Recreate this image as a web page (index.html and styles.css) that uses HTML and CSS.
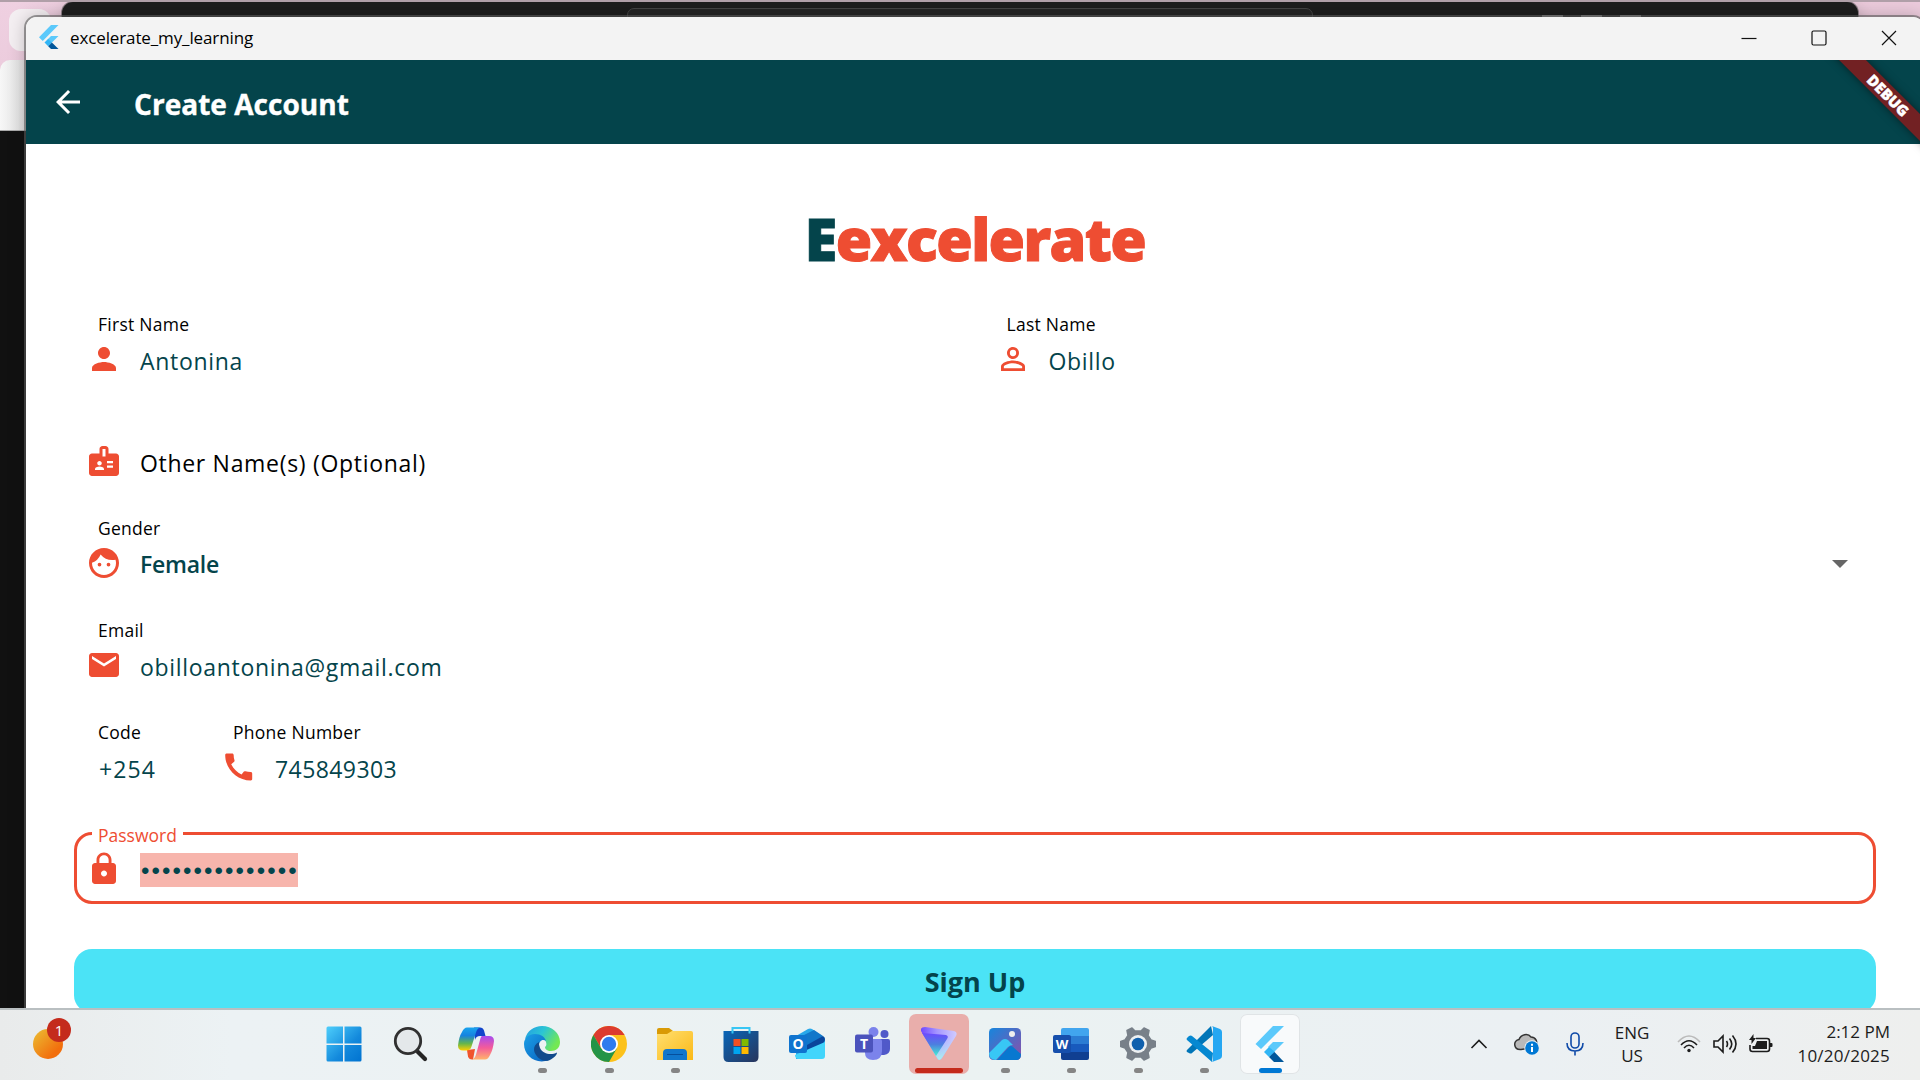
FILE: index.html
```html
<!DOCTYPE html>
<html lang="en">
<head>
<meta charset="utf-8">
<title>excelerate_my_learning</title>
<link rel="stylesheet" href="styles.css">
</head>
<body>
<div class="desktop">
  <div class="back-browser"><div class="back-tab"></div><div class="back-toolbar"></div></div>
  <div class="back-editor"><div class="editor-search"></div><div class="editor-controls"><i></i><i></i><i></i></div></div>

  <main class="window">
    <header class="titlebar">
      <svg class="app-icon" viewBox="0 0 20 24"><path fill="#5bc9fb" d="M12 0h7.500L3.750 16 0 12.200zM12 11h7.500l-6.800 6.700-3.700-3.700z"/><path fill="#31b5f5" d="M5.500 17.500 9.200 13.800l3.700 3.700-3.700 3.700z"/><path fill="#01579b" d="m9.200 21.200 3.700-3.700L19.500 24H12z"/></svg>
      <span class="window-title">excelerate_my_learning</span>
      <div class="controls">
        <svg viewBox="0 0 16 16"><path d="M.5 8.500h15"/></svg>
        <svg viewBox="0 0 16 16"><rect x="1" y="1" width="14" height="14" rx="1.500"/></svg>
        <svg viewBox="0 0 16 16"><path d="m1 1 14 14M15 1 1 15"/></svg>
      </div>
    </header>
    <section class="app">
      <div class="appbar">
        <svg class="back" viewBox="0 0 24 24"><path fill="#fff" d="M20 11H7.830l5.590-5.590L12 4l-8 8 8 8 1.410-1.410L7.830 13H20z"/></svg>
        <h1>Create Account</h1>
      </div>
      <div class="debug"><span>DEBUG</span></div>
      <form class="form">
        <div class="brand"><span>E</span>excelerate</div>
        <div class="row halves">
          <div class="field"><span class="label">First Name</span>
            <svg class="icon" viewBox="0 0 24 24"><path d="M12 12c2.210 0 4-1.790 4-4s-1.790-4-4-4-4 1.790-4 4 1.790 4 4 4zm0 2c-2.670 0-8 1.340-8 4v2h16v-2c0-2.660-5.330-4-8-4z"/></svg>
            <span class="value">Antonina</span></div>
          <div class="field"><span class="label">Last Name</span>
            <svg class="icon" viewBox="0 0 24 24"><path d="M12 5.900a2.100 2.100 0 1 1 0 4.200 2.100 2.100 0 0 1 0-4.200m0 9c2.970 0 6.100 1.460 6.100 2.100v1.100H5.900V17c0-.64 3.130-2.100 6.100-2.100M12 4C9.790 4 8 5.790 8 8s1.790 4 4 4 4-1.790 4-4-1.790-4-4-4zm0 9c-2.670 0-8 1.340-8 4v3h16v-3c0-2.660-5.330-4-8-4z"/></svg>
            <span class="value">Obillo</span></div>
        </div>
        <div class="row"><div class="field">
            <svg class="icon" viewBox="0 0 24 24"><path fill-rule="evenodd" d="M20 7h-5V4c0-1.100-.9-2-2-2h-2c-1.100 0-2 .9-2 2v3H4c-1.100 0-2 .9-2 2v11c0 1.100.9 2 2 2h16c1.100 0 2-.9 2-2V9c0-1.100-.9-2-2-2zM9 12c.83 0 1.500.67 1.500 1.500S9.830 15 9 15s-1.500-.67-1.500-1.500S8.170 12 9 12zm3 6H6v-.43c0-.6.36-1.150.92-1.390a5.200 5.200 0 0 1 4.160 0c.55.24.92.780.92 1.390zM11 4h2v5h-2zm7 12.500h-4V15h4zm0-3h-4V12h4z"/></svg>
            <span class="value plain">Other Name(s) (Optional)</span></div></div>
        <div class="row"><div class="field"><span class="label">Gender</span>
            <svg class="icon" viewBox="0 0 24 24"><path fill-rule="evenodd" d="M10.250 13a1.250 1.250 0 1 1-2.500 0 1.250 1.250 0 0 1 2.500 0zM15 11.750a1.250 1.250 0 1 0 0 2.500 1.250 1.250 0 0 0 0-2.500zM22 12c0 5.520-4.480 10-10 10S2 17.520 2 12 6.480 2 12 2s10 4.480 10 10zm-2 0c0-.78-.12-1.530-.33-2.240-.7.150-1.420.240-2.170.240a10 10 0 0 1-7.760-3.690A10.020 10.020 0 0 1 4 11.860V12c0 4.410 3.590 8 8 8s8-3.590 8-8z"/></svg>
            <span class="value strong">Female</span><span class="caret"></span></div></div>
        <div class="row"><div class="field"><span class="label">Email</span>
            <svg class="icon" viewBox="0 0 24 24"><path d="M20 4H4c-1.100 0-1.990.9-1.990 2L2 18c0 1.100.9 2 2 2h16c1.100 0 2-.9 2-2V6c0-1.100-.9-2-2-2zm0 4-8 5-8-5V6l8 5 8-5z"/></svg>
            <span class="value">obilloantonina@gmail.com</span></div></div>
        <div class="row">
          <div class="field code"><span class="label">Code</span><span class="value">+254</span></div>
          <div class="field"><span class="label">Phone Number</span>
            <svg class="icon" viewBox="0 0 24 24"><path transform="translate(-.2 0)" d="M20.010 15.380c-1.230 0-2.420-.2-3.530-.56a.98.980 0 0 0-1.010.240l-1.570 1.970c-2.830-1.350-5.480-3.900-6.890-6.830l1.950-1.660c.27-.28.35-.67.240-1.020-.37-1.110-.56-2.300-.56-3.530 0-.54-.45-.99-.99-.99H4.190C3.650 3 3 3.240 3 3.990 3 13.280 10.730 21 20.010 21c.710 0 .99-.63.990-1.180v-3.450c0-.54-.45-.99-.99-.99z"/></svg>
            <span class="value digits">745849303</span></div>
        </div>
        <div class="row"><fieldset class="field focused"><legend class="label">Password</legend>
            <svg class="icon" viewBox="0 0 24 24"><path d="M18 8h-1V6c0-2.760-2.240-5-5-5S7 3.240 7 6v2H6c-1.100 0-2 .9-2 2v10c0 1.100.9 2 2 2h12c1.100 0 2-.9 2-2V10c0-1.100-.9-2-2-2zm-6 9c-1.100 0-2-.9-2-2s.9-2 2-2 2 .9 2 2-.9 2-2 2zm3.100-9H8.900V6c0-1.710 1.390-3.100 3.100-3.100s3.100 1.390 3.100 3.100z"/></svg>
            <span class="value selected">•••••••••••••••</span></fieldset></div>
        <button class="signup" type="button"><span>Sign Up</span></button>
      </form>
    </section>
  </main>

  <footer class="taskbar">
    <div class="weather"><span class="badge">1</span></div>
    <nav class="apps">
      <div class="task"><svg viewBox="0 0 36 36"><defs><linearGradient id="win" x1="0" y1="0" x2="36" y2="36" gradientUnits="userSpaceOnUse"><stop stop-color="#4fd0fc"/><stop offset=".6" stop-color="#1389dc"/><stop offset="1" stop-color="#0072d0"/></linearGradient></defs><path fill="url(#win)" d="M2 .5h15v17H.5V2Q.5.500 2 .5zM18.500.5H34q1.500 0 1.500 1.500v15.500h-17zM.5 19H17v16.500H2Q.5 35.500.5 34zM18.500 19h17v15q0 1.500-1.500 1.500H18.500z"/></svg></div>
      <div class="task"><svg viewBox="0 0 36 36"><path d="m26 26 7 7" stroke="#252525" stroke-width="4.200" stroke-linecap="round"/><circle cx="16" cy="15" r="12.700" fill="#e4e8ea" stroke="#303030" stroke-width="2.800"/></svg></div>
      <div class="task"><svg viewBox="0 0 36 36"><defs><linearGradient id="cp1" x1="0" y1="0" x2="0" y2="1"><stop stop-color="#18a4ee"/><stop offset=".35" stop-color="#1783df"/><stop offset=".7" stop-color="#65b64b"/><stop offset="1" stop-color="#ffd000"/></linearGradient><linearGradient id="cp2" x1="0" y1="0" x2="0" y2="1"><stop stop-color="#a64bf0"/><stop offset=".5" stop-color="#f45b9a"/><stop offset="1" stop-color="#ffb36b"/></linearGradient></defs><path fill="#1145cb" d="M16 1.500h6q3 0 4 3l1.500 5.500H22q-4 0-5 4z"/><path fill="#f0542c" d="m9 24 8-1-2 10.500q-4 .5-5-3z"/><path fill="url(#cp1)" d="M9 1.500h13q-3 1-4 5l-4.500 14q-1 4-5 4H5q-5 0-5-5 1-9 4-13.500 2-4.500 5-4.500z"/><path fill="url(#cp2)" d="M24 10h7q5 0 5 5-1 9-4 14-2 4.500-5 4.500H14q3-1 4-5l4-14.500q1-4 2-4z"/></svg></div>
      <div class="task run"><svg viewBox="0 0 36 36"><defs><linearGradient id="ed1" x1="0" y1="0" x2="1" y2=".5"><stop stop-color="#239be5"/><stop offset=".5" stop-color="#2bc5d4"/><stop offset="1" stop-color="#73e853"/></linearGradient><linearGradient id="ed2" x1="0" y1="0" x2="1" y2="1"><stop stop-color="#1ba0e6"/><stop offset="1" stop-color="#0860c0"/></linearGradient></defs><path fill="url(#ed1)" d="M1 13C3 5 10 0 18 0c10 0 18 7 18 16 0 6-4 9-9 9-4 0-6-2-6-4 1-1 2-2 1-5-2-6-9-8-14-6z"/><path fill="url(#ed2)" d="M0 18C0 12 5 8 11 8c6 0 10 3 11 7-4-3-8 1-7 7 1 7 6 12 10 12-13 5-25-4-25-16z"/><path fill="#114a8b" d="M15 16c-6 3-6 9-3 13 4 6 11 8 17 3 3-2 4-4 4-5.500-6 3-14 1.500-17-4.500-1-3-1-4-1-6z"/></svg></div>
      <div class="task run"><svg viewBox="0 0 36 36"><circle cx="18" cy="18" r="18" fill="#fcc21b"/><path fill="#dc3b2f" d="M2.400 9A18 18 0 0 1 33.600 9H18l-7.800 13.500z"/><path fill="#249447" d="M2.400 9a18 18 0 0 0 15.600 27l7.800-13.500H10.200z"/><circle cx="18" cy="18" r="9" fill="#fff"/><circle cx="18" cy="18" r="7.200" fill="#2f7bee"/></svg></div>
      <div class="task run"><svg viewBox="0 0 36 36"><defs><linearGradient id="fo" x1="0" y1="0" x2="1" y2="1"><stop stop-color="#ffdf70"/><stop offset="1" stop-color="#fbb917"/></linearGradient></defs><path fill="#d99a05" d="M0 4q0-2 2-2h10l4 3-4 6H0z"/><path fill="url(#fo)" d="M0 8h10l5-3h19q2 0 2 2v27H0z"/><path fill="#1076cc" d="M6 34V27q0-4 4-4h16q4 0 4 4v7z"/><path stroke="#064f9c" d="M10 28.500h16"/></svg></div>
      <div class="task"><svg viewBox="0 0 36 36"><defs><linearGradient id="st" x1="0" y1="0" x2="1" y2="1"><stop stop-color="#0866b8"/><stop offset="1" stop-color="#29355b"/></linearGradient></defs><path fill="url(#st)" d="M.5 5h35v26q0 5-5 5h-25q-5 0-5-5z"/><path fill="none" stroke="#37c6f4" stroke-width="2" d="M9.500 7.500V2h17v5.500"/><path fill="#f25022" d="M10.500 13h7v7h-7z"/><path fill="#7fba00" d="M18.500 13h7v7h-7z"/><path fill="#00a4ef" d="M10.500 21h7v7h-7z"/><path fill="#ffb900" d="M18.500 21h7v7h-7z"/></svg></div>
      <div class="task"><svg viewBox="0 0 36 36"><path fill="#28a8ea" d="M7 10 19 3q2-1 4 0l13 9v8L20 33H7z"/><path fill="#1177ca" d="m13 10 12-6 9 6-16 11z"/><path fill="#0a469c" d="m18 19 16-9q2 1 2 4-1 3-3 4L18 27z"/><path fill="#42d5fb" d="M36 16v14q0 3-3 3H10q-4 0-4-4z"/><rect y="9" width="18" height="18" rx="2" fill="#0f74cf"/><text x="9" y="23" class="glyph">O</text></svg></div>
      <div class="task"><svg viewBox="0 0 36 36"><circle cx="29.500" cy="8" r="4" fill="#5059c9"/><path fill="#5059c9" d="M24 13h9q2 0 2 2v8q0 5-6 6h-5z"/><circle cx="18.500" cy="6" r="5" fill="#7b83eb"/><path fill="#7b83eb" d="M10 13h15q2 0 2 2v10q0 9-9 9-8 0-8-7z"/><rect y="8.500" width="18" height="18" rx="2" fill="#4b53bc"/><text x="9" y="22.500" class="glyph">T</text></svg></div>
      <div class="task alert"><svg viewBox="0 0 36 36"><defs><linearGradient id="pv" x1="0" y1="0" x2="0" y2="1"><stop stop-color="#6d4aff"/><stop offset=".5" stop-color="#4c80df"/><stop offset="1" stop-color="#46eed2"/></linearGradient><linearGradient id="pv2" x1="0" y1="0" x2="1" y2="0"><stop stop-color="#7048ff"/><stop offset=".45" stop-color="#a596ff"/><stop offset="1" stop-color="#d0ccff"/></linearGradient><linearGradient id="pv3" x1="0" y1="0" x2="0" y2="1"><stop offset=".3" stop-color="#b8e8ff" stop-opacity="0"/><stop offset="1" stop-color="#a8f2ee"/></linearGradient></defs><path fill="url(#pv2)" d="M4 1 33 5q4 1 2 5L21 32q-3 4-5 0L0 5q-1-4 4-4z"/><path fill="url(#pv3)" d="M4 1 33 5q4 1 2 5L21 32q-3 4-5 0L0 5q-1-4 4-4z"/><path fill="url(#pv)" d="M1 7 25 9q3 1 1 4L15 30z"/></svg></div>
      <div class="task run"><svg viewBox="0 0 36 36"><defs><linearGradient id="ph" x1="0" y1="0" x2="1" y2="1"><stop stop-color="#1686dd"/><stop offset="1" stop-color="#8e4ea9"/></linearGradient></defs><rect x="2" y="2" width="32" height="32" rx="4.500" fill="url(#ph)"/><path fill="#0878d0" d="M10 34 22 21q2-2 4 0l8 7q0 6-5 6z"/><path fill="#38c7f5" d="M2 27 15 14q3-2 6 0l5 5q-3 0-5 2L9 34q-7 0-7-7z"/><circle cx="25" cy="8" r="3" fill="#eee"/></svg></div>
      <div class="task run"><svg viewBox="0 0 36 36"><path fill="#41a5ee" d="M8 4q0-2 2-2h24q2 0 2 2v6H8z"/><path fill="#2b7cd3" d="M8 10h28v8H8z"/><path fill="#185abd" d="M8 18h28v8H8z"/><path fill="#103f91" d="M8 26h28v6q0 2-2 2H10q-2 0-2-2z"/><rect y="9" width="18" height="18" rx="2" fill="#164fac"/><text x="9" y="23" class="glyph w">W</text></svg></div>
      <div class="task run"><svg viewBox="0 0 36 36"><path fill="#788089" stroke="#788089" stroke-width="1.500" stroke-linejoin="round" d="m12 2 3 3h6l3-3 5 2.500-1 5 3 4.500 4.500 1.500v5L31 22l-3 4.500 1 5-5 2.500-3-3h-6l-3 3-5-2.500 1-5L5 22 .7 20.500v-5L5 14l3-4.500-1-5z"/><circle cx="18" cy="18" r="9" fill="#edf0f2"/><circle cx="18" cy="18" r="6.300" fill="#1060ad"/></svg></div>
      <div class="task run"><svg viewBox="0 0 36 36"><path fill="#0075b7" d="M1 24 25 0l2 9L6 27q-1 1-3 0l-2-1q-1-1 0-2z"/><path fill="#0588d1" d="m1 12 2-2q2-1 3 0l21 17-1 9L1 14q-1-1 0-2z"/><path fill="#25a7f2" d="M26 0 34 3q2 1 2 3v24q0 2-2 3l-8 3q1-1 1-2V2q0-1-1-2z"/></svg></div>
      <div class="task active"><svg viewBox="0 0 36 36"><path fill="#5bc9fb" d="M21 0h11L9 23 3.500 18zM21 16h11L22 26l-6-5z"/><path fill="#31b5f5" d="m12 26 5-5 6 5-6 5z"/><path fill="#01579b" d="m17 31 5.500-5L32 36H22z"/></svg></div>
    </nav>
    <div class="tray">
      <svg class="chev" viewBox="0 0 18 10"><path d="m1.500 9 7.500-7.500L16.500 9"/></svg>
      <svg class="cloud" viewBox="0 0 26 24"><path class="puff" d="M7 17.500C-1 18-1 8 5 7.500 7 2 14 1 17 5c5 0 7 5 5 10z"/><circle cx="18" cy="16" r="7.700" fill="#eaf0f3" stroke="none"/><circle cx="18" cy="16" r="6.800" fill="#0078d4" stroke="none"/><path stroke="#fff" stroke-width="2" d="M18 11.800v2m0 1.200v5"/></svg>
      <svg class="mic" viewBox="0 0 18 24"><rect x="5" y="1" width="8" height="15" rx="4"/><path d="M1 11q0 8 8 8t8-8M9 19v4.500"/></svg>
      <div class="lang"><span>ENG</span><span>US</span></div>
      <svg class="wifi" viewBox="0 0 24 18"><path stroke="#bbb" d="M1 7Q12-5 23 7"/><path d="M4 10q8-8.500 16 0M7 13q5-5.500 10 0"/><circle cx="12" cy="15.500" r="1.700" fill="#1c1c1c" stroke="none"/></svg>
      <svg class="vol" viewBox="0 0 24 20"><path d="M1 7h4l5-5v16l-5-5H1zM13.500 7q2 3 0 6M16.500 4.500q4.500 5.500 0 11M19.500 1.500q7 8.500 0 17"/></svg>
      <svg class="bat" viewBox="0 0 24 20"><path d="M7 4.500h11q2.500 0 2.500 2.500v8q0 2.500-2.500 2.500H3.500Q1 17.500 1 15v-4"/><path fill="#1c1c1c" stroke="none" d="M8 7h10v8H3.500v-3H6zM21 9h1.500q1 0 1 1v2q0 1-1 1H21zM4.500 0v4H7L2.500 10V6H0z"/></svg>
      <div class="clock"><span>2:12 PM</span><span class="date">10/20/2025</span></div>
    </div>
  </footer>
</div>
</body>
</html>
```

FILE: styles.css
```css
* { box-sizing: border-box; }
body { margin: 0; width: 1920px; height: 1080px; overflow: hidden; font-family: "Open Sans", "Noto Sans", sans-serif; color: #111; }
.desktop { position: relative; width: 1920px; height: 1080px; overflow: hidden; background: linear-gradient(90deg, #efcfe0, #eccbdc); border-top: 2px solid #b09fa8; }
.back-browser { position: absolute; left: 0; top: -2px; width: 62px; height: 1010px; background: linear-gradient(180deg, #efd0e1, #e9c8d9 130px, #111 131px); }
.back-tab { position: absolute; left: 9px; top: 9px; width: 42px; height: 42px; border-radius: 12px; background: #f4eff2; }
.back-toolbar { position: absolute; left: 0; top: 60px; width: 40px; height: 71px; border-radius: 10px 0 0; background: linear-gradient(90deg, #f7f7f7, #ddd 26px); border-bottom: 1px solid #aaa; }
.back-editor { position: absolute; left: 62px; top: 0; width: 1796px; height: 60px; border-radius: 11px 11px 0 0; background: #1d1d1d; box-shadow: 0 0 0 1px #8b7d84, 0 6px 16px rgba(0,0,0,.25); }
.editor-search { position: absolute; left: 565px; top: 6px; width: 686px; height: 30px; border: 1px solid #444; border-radius: 7px; background: #252525; }
.editor-controls { position: absolute; left: 1480px; top: 13px; display: flex; gap: 18px; }
.editor-controls i { width: 21px; height: 2px; background: #888; }

.window { position: absolute; left: 26px; top: 15px; width: 1898px; height: 1000px; border-radius: 11px 11px 0 0; background: #fff; box-shadow: 0 0 0 2px rgba(90,90,90,.6), 0 0 18px rgba(0,0,0,.25); }
.titlebar { display: flex; align-items: center; height: 43px; padding: 0 27px 0 13px; background: #f3f3f3; border-radius: 11px 11px 0 0; }
.app-icon { width: 20px; height: 24px; margin-top: -4px; }
.window-title { margin-left: 11px; margin-top: -3px; font-size: 17px; letter-spacing: -.12px; color: #000; white-space: nowrap; }
.controls { display: flex; gap: 54px; margin-left: auto; margin-top: -2px; }
.controls svg { width: 16px; height: 16px; fill: none; stroke: #111; stroke-width: 1.2; }
.app { position: relative; height: 957px; overflow: hidden; }
.appbar { display: flex; align-items: center; height: 84px; padding-left: 24px; background: #04444b; }
.back { width: 36px; height: 36px; }
.appbar h1 { margin: 3px 0 0 48px; font-size: 28px; font-weight: 700; letter-spacing: .04px; -webkit-text-stroke: .4px #fff; color: #fff; white-space: nowrap; }
.debug { position: absolute; left: 1762px; top: 26px; width: 200px; height: 19px; display: flex; align-items: center; justify-content: center; transform: rotate(45deg); background: #722123; box-shadow: 0 0 9px rgba(0,0,0,.5); color: #fff; font-size: 15px; font-weight: 800; -webkit-text-stroke: .4px #fff; line-height: 19px; }

.form { display: flex; flex-direction: column; gap: 30px; padding: 48px; }
.brand { height: 100px; text-align: center; font-size: 59px; line-height: 92px; font-weight: 800; letter-spacing: -1.600px; -webkit-text-stroke: 1px currentColor; color: #ee4d32; white-space: nowrap; }
.brand span { color: #04444b; }
.row { display: flex; gap: 15px; height: 72px; }
.field { position: relative; display: flex; flex: 1; align-items: center; height: 72px; margin: 0; padding: 0 12px; border: 0; min-width: 0; }
.field.code { flex: 0 0 120px; padding-left: 25px; }
.label { position: absolute; left: 24px; top: -10px; line-height: 24px; font-size: 17.500px; letter-spacing: .26px; color: #000; white-space: nowrap; }
.icon { flex: none; width: 36px; height: 36px; margin: 2px 18px 0 0; fill: #ee4d32; }
.value { margin-top: 5px; font-size: 23px; line-height: 34px; letter-spacing: .69px; color: #04444b; white-space: nowrap; }
.value.plain { color: #000; }
.value.digits { letter-spacing: .42px; }
.code .value { letter-spacing: 1.100px; }
.value.strong { margin-top: 4px; font-weight: 600; letter-spacing: -.24px; }
.caret { margin-left: auto; margin-right: 16px; margin-top: 3px; border: 8px solid transparent; border-top-color: #666; border-bottom: 0; }
.field.focused { border: 3px solid #ee4d32; border-radius: 18px; padding: 0 9px; }
.focused .label { left: 15px; top: -12px; padding: 0 6px; background: #fff; color: #ee4d32; letter-spacing: 0; }
.value.selected { margin-top: 4px; padding-top: 1px; line-height: 33px; background: #f7b5ac; font-family: "Liberation Sans", sans-serif; font-size: 24px; letter-spacing: 2.110px; text-indent: 1px; width: 158px; overflow: hidden; }
.signup { height: 64px; margin-top: 15px; padding-top: 2px; border: 0; border-radius: 18px; background: #4be3f6; color: #04444b; font: 700 27px "Open Sans", sans-serif; }

.taskbar { position: absolute; left: 0; top: 1006px; width: 1920px; height: 72px; display: flex; align-items: center; border-top: 2px solid #b9bfc1; background: linear-gradient(90deg, #e9ebeb, #ecf2f4 12%, #ebf2f2 50%, #ebf0f3 80%, #eeefee); }
.weather { position: relative; width: 30px; height: 30px; margin: -2px 0 0 33px; border-radius: 50%; background: linear-gradient(135deg, #ebc034, #f26f0d 75%); }
.badge { position: absolute; left: 14px; top: -11px; width: 24px; height: 24px; border-radius: 50%; background: #c42b1c; color: #fff; font-size: 15px; line-height: 24px; text-align: center; }
.apps { display: grid; grid-template-columns: repeat(15, 66.130px); margin-left: 248px; margin-top: -2px; }
.task { position: relative; display: grid; place-items: center; width: 60px; height: 60px; margin: 0 3px; border-radius: 7px; }
.task svg { width: 36px; height: 36px; }
.task.run::after, .task.alert::after, .task.active::after { content: ""; position: absolute; bottom: 1px; left: 26px; width: 9px; height: 5px; border-radius: 3px; background: #858585; }
.task.alert { background: #e9aeab; }
.task.alert::after { left: 6px; width: 48px; background: #c42b1c; }
.task.active { background: #f8fafb; box-shadow: inset 0 0 0 1px #e0e4e6; }
.task.active::after { left: 19px; width: 23px; background: #0078d4; }
.glyph { font: 700 14px "Open Sans", sans-serif; fill: #fff; text-anchor: middle; }
.glyph.w { font-size: 13px; }
.tray { display: flex; align-items: center; margin-left: auto; margin-top: -2px; padding-right: 30px; }
.tray svg { fill: none; stroke: #1c1c1c; stroke-width: 1.600; }
.chev { width: 18px; height: 10px; margin-right: 26px; }
.cloud { width: 26px; height: 24px; margin-right: 26px; }
.tray .puff { fill: #b9b9b9; stroke: #333; stroke-width: 1.500; }
.mic { width: 18px; height: 24px; margin-right: 31px; }
.tray .mic { stroke: #0f4aa8; }
.lang, .clock { display: flex; flex-direction: column; font-size: 17px; line-height: 23px; color: #1c1c1c; white-space: nowrap; }
.lang { align-items: center; width: 34px; margin-right: 28px; }
.wifi { width: 24px; height: 18px; margin-right: 12px; }
.vol { width: 24px; height: 20px; margin-right: 12px; }
.bat { width: 24px; height: 20px; margin-right: 24px; }
.clock { align-items: flex-end; width: 93px; line-height: 24px; }
.date { letter-spacing: .23px; }
```
